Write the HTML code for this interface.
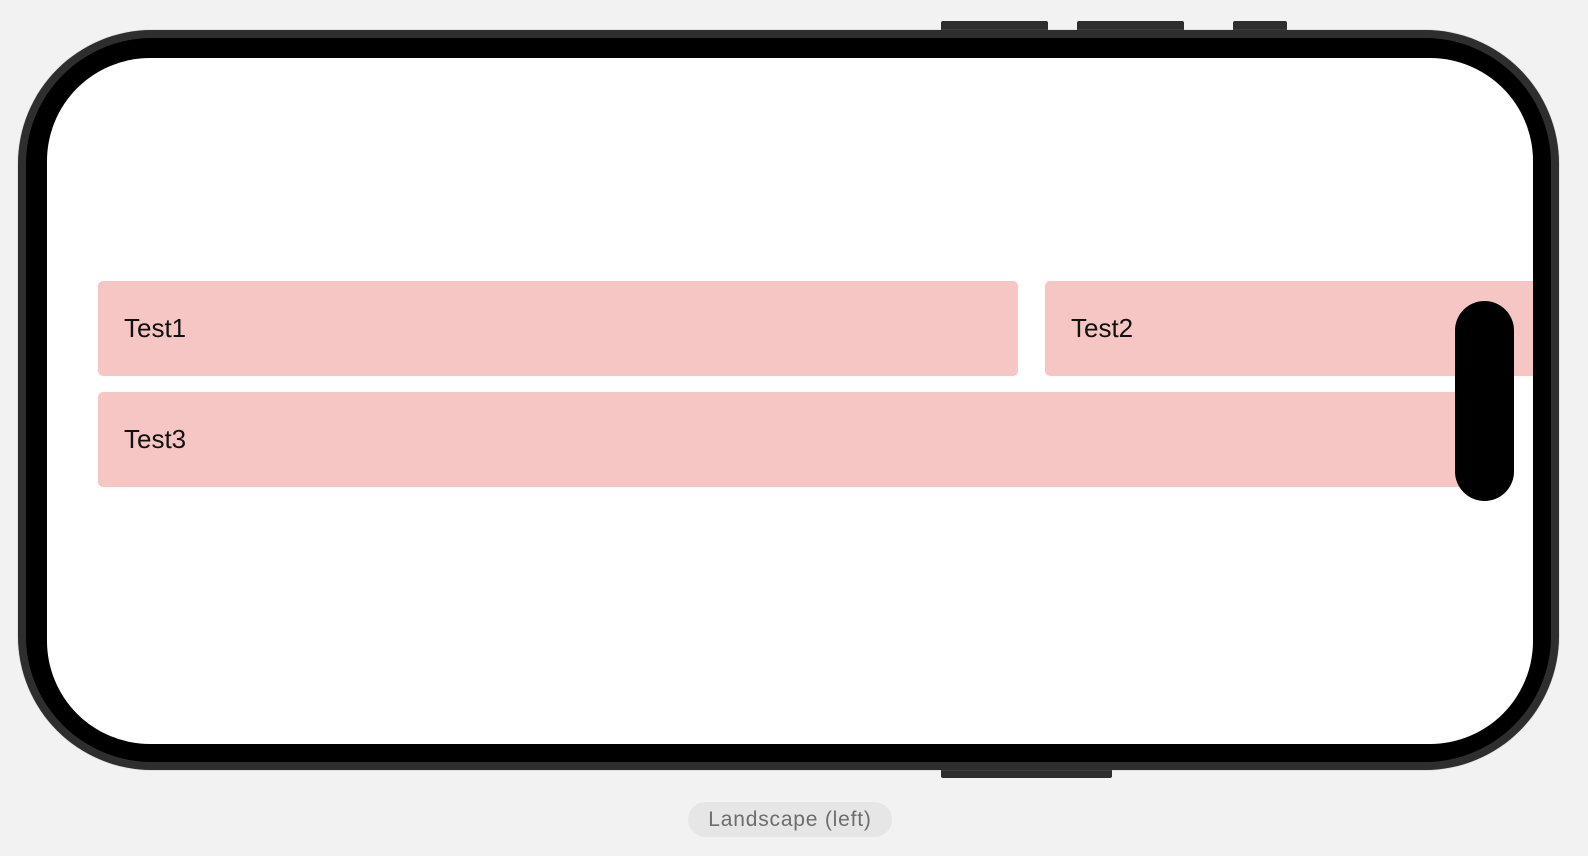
<!DOCTYPE html>
<html><head><style>
body{margin:0;width:1588px;height:856px;background:#f2f2f2;position:relative;overflow:hidden;font-family:"Liberation Sans",sans-serif}
.a{position:absolute}
.btn{background:#2e2e2e;border-radius:2px}
.card{background:#f5c6c3;border-radius:5px;font-size:26px;color:#111;line-height:95px;padding-left:26px;box-sizing:border-box}
</style></head><body>
<div class="a btn" style="left:941px;top:21px;width:107px;height:14px"></div>
<div class="a btn" style="left:1077px;top:21px;width:107px;height:14px"></div>
<div class="a btn" style="left:1233px;top:21px;width:54px;height:14px"></div>
<div class="a btn" style="left:941px;top:765px;width:171px;height:13px"></div>
<div class="a" style="left:18px;top:30px;width:1541px;height:740px;border-radius:134px;background:#2e2e2e;box-shadow:0 0 1px #888"></div>
<div class="a" style="left:26px;top:38px;width:1525px;height:724px;border-radius:126px;background:#000"></div>
<div class="a" style="left:47px;top:58px;width:1486px;height:686px;border-radius:103px;background:#fff;overflow:hidden">
<div class="a card" style="left:51px;top:223px;width:920px;height:95px">Test1</div>
<div class="a card" style="left:998px;top:223px;width:600px;height:95px">Test2</div>
<div class="a card" style="left:51px;top:334px;width:1400px;height:95px">Test3</div>
<div class="a" style="left:1408px;top:243px;width:59px;height:200px;border-radius:29.5px;background:#000"></div>
</div>
<div class="a" style="left:688px;top:802px;width:204px;height:35px;border-radius:18px;background:#e6e6e6;color:#6d6d6d;font-size:21px;letter-spacing:0.8px;line-height:35px;text-align:center">Landscape (left)</div>
</body></html>
